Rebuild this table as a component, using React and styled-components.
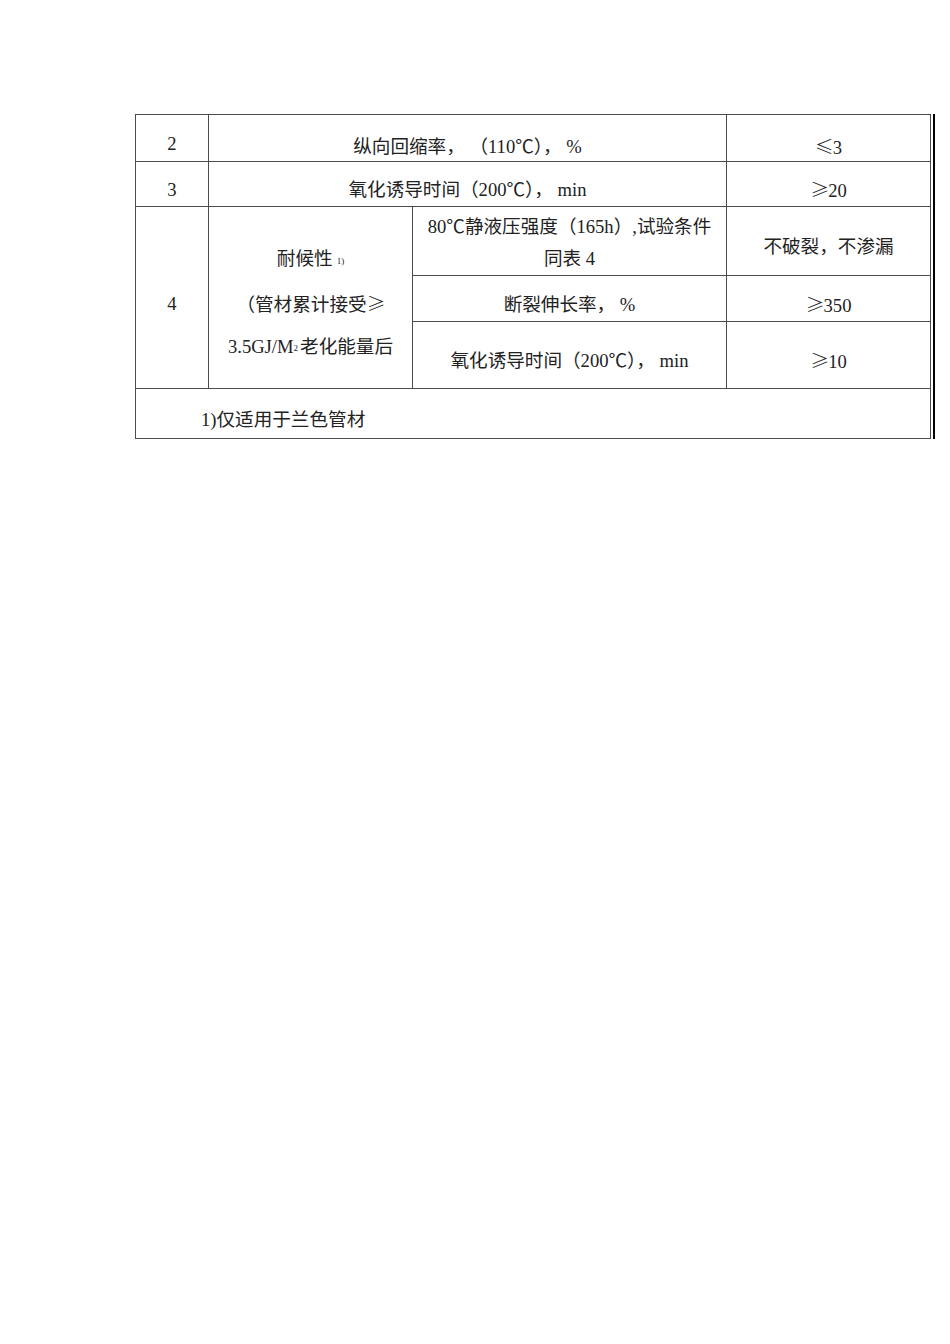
import styled, { createGlobalStyle } from "styled-components";

const GlobalStyle = createGlobalStyle`
    body {
        margin: 0;
        background: #fff;
    }
`;

const Page = styled.div`
    padding: 114px 0 0 135px;
`;

const Frame = styled.div`
    display: inline-block;
    border-right: 2px solid #000;
    padding-right: 2px;
`;

const Table = styled.table`
    border-collapse: collapse;
    table-layout: fixed;
    width: 796px;
    font-family: "Liberation Serif", "Noto Sans CJK SC", serif;
    font-size: 18.6px;
    color: #222;
`;

const Row = styled.tr`
    height: ${(p) => p.$h}px;
`;

const Cell = styled.td`
    border: 1px solid #4a4a4a;
    text-align: ${(p) => (p.$left ? "left" : "center")};
    vertical-align: middle;
    padding: ${(p) => p.$pt ?? 12}px 0 0 ${(p) => p.$pl ?? 0}px;
    line-height: ${(p) => p.$lh ?? 24}px;
    white-space: pre;
`;

const Sym = styled.span`
    font-family: "Noto Sans CJK SC", sans-serif;
    font-weight: 300;
    font-size: 19px;
    display: inline-block;
    width: 18px;
    text-align: center;
`;

const Small = styled.span`
    font-size: 9px;
    vertical-align: middle;
    margin-left: 4px;
`;

const Sub = styled.span`
    font-size: 9px;
    vertical-align: middle;
    margin-right: 2px;
`;

function App() {
    return (
        <>
            <GlobalStyle />
            <Page>
                <Frame>
                    <Table>
                        <colgroup>
                            <col style={{ width: 73 }} />
                            <col style={{ width: 204 }} />
                            <col style={{ width: 314 }} />
                            <col style={{ width: 204 }} />
                        </colgroup>
                        <tbody>
                            <Row $h={47}>
                                <Cell $pt={12}>2</Cell>
                                <Cell colSpan={2} $pt={18}>纵向回缩率， （110℃）， %</Cell>
                                <Cell $pt={18}><Sym>≤</Sym>3</Cell>
                            </Row>
                            <Row $h={45}>
                                <Cell>3</Cell>
                                <Cell colSpan={2}>氧化诱导时间（200℃）， min</Cell>
                                <Cell><Sym>≥</Sym>20</Cell>
                            </Row>
                            <Row $h={68}>
                                <Cell rowSpan={3}>4</Cell>
                                <Cell rowSpan={3} $lh={42}>
                                    耐候性<Small>1)</Small>
                                    <br />
                                    （管材累计接受<Sym>≥</Sym>
                                    <br />
                                    3.5GJ/M<Sub>2</Sub>老化能量后
                                </Cell>
                                <Cell $pt={4} $lh={32}>
                                    80℃静液压强度（165h）,试验条件
                                    <br />
                                    同表 4
                                </Cell>
                                <Cell>不破裂，不渗漏</Cell>
                            </Row>
                            <Row $h={46}>
                                <Cell>断裂伸长率， %</Cell>
                                <Cell><Sym>≥</Sym>350</Cell>
                            </Row>
                            <Row $h={67}>
                                <Cell>氧化诱导时间（200℃）， min</Cell>
                                <Cell><Sym>≥</Sym>10</Cell>
                            </Row>
                            <Row $h={50}>
                                <Cell colSpan={4} $left $pl={65}>
                                    1)仅适用于兰色管材
                                </Cell>
                            </Row>
                        </tbody>
                    </Table>
                </Frame>
            </Page>
        </>
    );
}

export default App;
